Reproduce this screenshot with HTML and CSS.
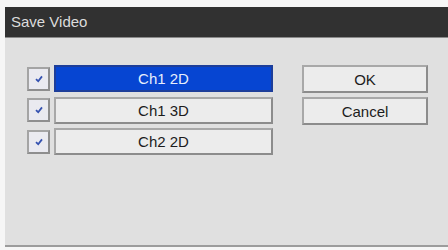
FILE: index.html
```html
<!DOCTYPE html>
<html>
<head>
<meta charset="utf-8">
<link rel="stylesheet" href="styles.css">
</head>
<body>
<div class="dialog">
  <div class="titlebar">Save Video</div>
  <div class="content">
    <div class="list">
      <div class="row">
        <span class="check"><svg width="8" height="8" viewBox="0 0 8 8"><path d="M1 4.2 L3.2 6.2 L7 1.4" fill="none" stroke="#3552b0" stroke-width="1.8"/></svg></span>
        <button class="item selected">Ch1 2D</button>
      </div>
      <div class="row">
        <span class="check"><svg width="8" height="8" viewBox="0 0 8 8"><path d="M1 4.2 L3.2 6.2 L7 1.4" fill="none" stroke="#3552b0" stroke-width="1.8"/></svg></span>
        <button class="item">Ch1 3D</button>
      </div>
      <div class="row">
        <span class="check"><svg width="8" height="8" viewBox="0 0 8 8"><path d="M1 4.2 L3.2 6.2 L7 1.4" fill="none" stroke="#3552b0" stroke-width="1.8"/></svg></span>
        <button class="item">Ch2 2D</button>
      </div>
    </div>
    <div class="actions">
      <button class="btn">OK</button>
      <button class="btn">Cancel</button>
    </div>
  </div>
</div>
</body>
</html>
```
FILE: styles.css
```css
html, body {
  margin: 0;
  padding: 0;
  background: #f6f6f6;
  font-family: "Liberation Sans", Arial, sans-serif;
}
body {
  width: 448px;
  height: 250px;
  overflow: hidden;
  padding-top: 7px;
  padding-left: 5px;
  box-sizing: border-box;
}
.dialog {
  width: 443px;
  display: flex;
  flex-direction: column;
}
.titlebar {
  height: 31px;
  background: #313131;
  color: #dcdcdc;
  font-size: 15px;
  line-height: 30px;
  padding-left: 6px;
  border-bottom: 1px solid #8a8a8a;
  box-sizing: border-box;
}
.content {
  height: 209px;
  background: #e0e0e0;
  border-bottom: 2px solid #9c9c9c;
  box-sizing: border-box;
  display: flex;
  padding: 27px 0 0 22px;
  gap: 29px;
}
.list {
  display: flex;
  flex-direction: column;
  gap: 4.5px;
}
.row {
  display: flex;
  align-items: center;
  gap: 4px;
}
.check {
  width: 23px;
  height: 24px;
  box-sizing: border-box;
  border: 2px solid #a4a4a4;
  border-bottom-color: #8e8e8e;
  border-right-color: #8e8e8e;
  background: #eaeaf0;
  display: flex;
  align-items: center;
  justify-content: center;
}
.item, .btn {
  font-family: "Liberation Sans", Arial, sans-serif;
  font-size: 15px;
  color: #1c1c1c;
  background: #ececec;
  border: 2px solid #a8a8a8;
  border-bottom-color: #8c8c8c;
  border-right-color: #8c8c8c;
  box-sizing: border-box;
  padding: 0;
  margin: 0;
}
.item {
  width: 219px;
  height: 27px;
}
.item.selected {
  background: #0645d2;
  border-color: #1d3e9a;
  color: #e8eefc;
}
.actions {
  display: flex;
  flex-direction: column;
  gap: 4px;
}
.btn {
  width: 126px;
  height: 28px;
}
```
